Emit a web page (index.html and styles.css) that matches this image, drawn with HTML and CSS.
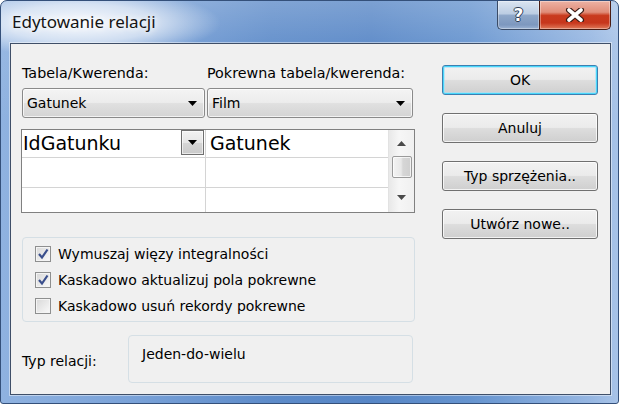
FILE: index.html
```html
<!DOCTYPE html>
<html lang="pl">
<head>
<meta charset="utf-8">
<title>Edytowanie relacji</title>
<link rel="stylesheet" href="styles.css">
</head>
<body>
<div class="window">
  <div class="titlebar">
    <div class="title">Edytowanie relacji</div>
    <div class="caption">
      <div class="cbtn help"><span>?</span></div>
      <div class="cbtn close">
        <svg width="20" height="14" viewBox="0 0 20 14">
          <path d="M4 2 L16 12 M16 2 L4 12" stroke="#3a1a14" stroke-width="6" stroke-linecap="round"/>
          <path d="M4 2 L16 12 M16 2 L4 12" stroke="#ffffff" stroke-width="3.6" stroke-linecap="round"/>
        </svg>
      </div>
    </div>
  </div>
  <div class="client">
    <div class="left">
      <div class="labels">
        <span class="lab1">Tabela/Kwerenda:</span>
        <span>Pokrewna tabela/kwerenda:</span>
      </div>
      <div class="combos">
        <div class="combo c1"><span>Gatunek</span><svg class="arr" width="9" height="5" viewBox="0 0 9 5"><path d="M0 0 H9 L4.5 5 Z" fill="#000"/></svg></div>
        <div class="combo c2"><span>Film</span><svg class="arr" width="9" height="5" viewBox="0 0 9 5"><path d="M0 0 H9 L4.5 5 Z" fill="#000"/></svg></div>
      </div>
      <div class="grid">
        <div class="col col1">
          <div class="row r1"><span class="cell">IdGatunku</span><div class="dd"><svg width="9" height="5" viewBox="0 0 9 5"><path d="M0 0 H9 L4.5 5 Z" fill="#000"/></svg></div></div>
          <div class="row r2"></div>
          <div class="row r3"></div>
        </div>
        <div class="col col2">
          <div class="row r1"><span class="cell c2cell">Gatunek</span></div>
          <div class="row r2"></div>
          <div class="row r3"></div>
        </div>
        <div class="scroll">
          <svg class="sarrow" width="9" height="5" viewBox="0 0 9 5"><path d="M0 5 H9 L4.5 0 Z" fill="#4a4a4a"/></svg>
          <div class="thumb"></div>
          <svg class="sarrow down" width="9" height="5" viewBox="0 0 9 5"><path d="M0 0 H9 L4.5 5 Z" fill="#4a4a4a"/></svg>
        </div>
      </div>
      <div class="group">
        <div class="chk"><span class="box checked"><svg width="12" height="12" viewBox="0 0 12 12"><path d="M2 6 L5 9.5 L10.5 1.5" fill="none" stroke="#3a4f8c" stroke-width="2.2"/></svg></span><span>Wymuszaj więzy integralności</span></div>
        <div class="chk"><span class="box checked"><svg width="12" height="12" viewBox="0 0 12 12"><path d="M2 6 L5 9.5 L10.5 1.5" fill="none" stroke="#3a4f8c" stroke-width="2.2"/></svg></span><span>Kaskadowo aktualizuj pola pokrewne</span></div>
        <div class="chk"><span class="box"></span><span>Kaskadowo usuń rekordy pokrewne</span></div>
      </div>
      <div class="reltype">
        <span class="rlabel">Typ relacji:</span>
        <div class="relbox">Jeden-do-wielu</div>
      </div>
    </div>
    <div class="buttons">
      <div class="btn default">OK</div>
      <div class="btn">Anuluj</div>
      <div class="btn">Typ sprzężenia..</div>
      <div class="btn">Utwórz nowe..</div>
    </div>
  </div>
</div>
</body>
</html>
```
FILE: styles.css
```css
* { box-sizing: border-box; }
html, body { margin: 0; background: #ffffff; }
body {
  font-family: "DejaVu Sans", Tahoma, sans-serif;
  font-size: 14px;
  color: #000;
}
.window {
  width: 619px;
  height: 404px;
  border: 1px solid #34507a;
  border-radius: 7px 7px 3px 3px;
  display: flex;
  flex-direction: column;
  background:
    radial-gradient(ellipse 140px 34px at 80px 22px, rgba(255,255,255,0.95), rgba(255,255,255,0.6) 55%, rgba(255,255,255,0) 100%),
    linear-gradient(to bottom, rgba(255,255,255,0.22) 0, rgba(255,255,255,0.08) 40px, rgba(255,255,255,0) 120px),
    linear-gradient(to right, #8fb2e0 0, #7aa2d8 130px, #5d8bc9 270px, #5786c6 370px, #6694cf 470px, #97b7e2 590px, #a9c4e8 619px);
}
.titlebar {
  height: 42px;
  display: flex;
  justify-content: space-between;
  align-items: flex-start;
}
.title {
  font-family: "Noto Sans", sans-serif;
  font-size: 17px;
  line-height: 22px;
  padding: 10px 0 0 11px;
  color: #141414;
  text-shadow: 0 0 6px #fff, 0 0 10px #fff;
}
.caption {
  display: flex;
  margin-right: 7px;
}
.cbtn {
  height: 29px;
  display: flex;
  align-items: center;
  justify-content: center;
  border: 1px solid #3a4b66;
  border-top: none;
  box-shadow: inset 0 0 0 1px rgba(255,255,255,0.35);
}
.help {
  width: 42px;
  border-radius: 0 0 0 5px;
  border-right: none;
  background: linear-gradient(to bottom, #dbe5f1 0%, #bccde3 45%, #8ea7c9 52%, #7d98bf 85%, #9bb2d3 100%);
}
.help span {
  font-family: "DejaVu Sans", sans-serif;
  font-weight: bold;
  font-size: 17px;
  color: #fff;
  text-shadow: 1px 0 0 #2e3c55, -1px 0 0 #2e3c55, 0 1px 0 #2e3c55, 0 -1px 0 #2e3c55;
}
.close {
  width: 72px;
  border-radius: 0 0 5px 0;
  border-color: #4a1d14;
  background: linear-gradient(to bottom, #ecb2a4 0%, #e08d79 40%, #c93a1e 52%, #c7361c 78%, #e07a5a 100%);
}
.client {
  margin-left: 9px;
  width: 601px;
  height: 352px;
  border: 1px solid #3f4f68;
  box-shadow: 0 0 0 1px rgba(255,255,255,0.45);
  background: #f0f0f0;
  display: flex;
  padding: 21px 0 0 11px;
}
.left {
  width: 393px;
  display: flex;
  flex-direction: column;
}
.labels {
  display: flex;
  height: 16px;
  line-height: 16px;
  font-size: 14.3px;
}
.lab1 { width: 185px; }
.combos {
  margin-top: 7px;
  display: flex;
  gap: 2px;
  height: 30px;
}
.combo {
  height: 30px;
  border: 1px solid #8a8a8a;
  border-radius: 3px;
  background: linear-gradient(to bottom, #f4f4f4 0%, #ececec 48%, #e0e0e0 52%, #d4d4d4 100%);
  box-shadow: inset 0 0 0 1px rgba(255,255,255,0.7);
  display: flex;
  align-items: center;
  justify-content: space-between;
  padding: 0 7px 0 4px;
}
.c1 { width: 183px; }
.c2 { width: 206px; }
.grid {
  margin-top: 11px;
  margin-left: -1px;
  width: 394px;
  height: 84px;
  border: 1px solid #808080;
  background: #fff;
  display: flex;
}
.col { display: flex; flex-direction: column; }
.col1 { width: 184px; border-right: 1px solid #d4d4d4; }
.col2 { width: 182px; }
.row { border-bottom: 1px solid #d4d4d4; display: flex; align-items: flex-start; justify-content: space-between; }
.row.r1 { height: 28px; }
.row.r2 { height: 30px; }
.row.r3 { flex: 1; border-bottom: none; }
.cell {
  font-size: 19px;
  line-height: 27px;
  padding-left: 1px;
}
.c2cell { padding-left: 4px; }
.dd {
  width: 23px;
  height: 25px;
  margin-right: 1px;
  border: 1px solid #6f6f6f;
  background: linear-gradient(to bottom, #f2f2f2 0%, #e6e6e6 50%, #d6d6d6 51%, #cacaca 100%);
  box-shadow: inset 0 0 0 1px rgba(255,255,255,0.6);
  display: flex;
  align-items: center;
  justify-content: center;
}
.scroll {
  width: 26px;
  border-left: 1px solid #e2e2e2;
  background: linear-gradient(to right, #e8e8e8, #f6f6f6 40%, #f0f0f0);
  display: flex;
  flex-direction: column;
  align-items: center;
}
.sarrow { margin-top: 11px; }
.thumb {
  margin-top: 10px;
  width: 20px;
  height: 22px;
  border: 1px solid #9a9a9a;
  border-radius: 2px;
  background: linear-gradient(to right, #f3f3f3 0%, #e8e8e8 45%, #d6d6d6 55%, #cfcfcf 100%);
  box-shadow: inset 0 0 0 1px rgba(255,255,255,0.7);
}
.sarrow.down { margin-top: 17px; }
.group {
  margin-top: 24px;
  height: 85px;
  border: 1px solid #d5dfe5;
  border-radius: 4px;
  padding: 3px 0 0 12px;
}
.chk {
  height: 26px;
  display: flex;
  align-items: center;
  gap: 7px;
}
.box {
  width: 16px;
  height: 16px;
  border: 1px solid #8e8f8f;
  background: linear-gradient(135deg, #d8d8d8 0%, #ececec 60%, #fafafa 100%);
  box-shadow: inset 0 0 0 1px #f4f4f4;
  display: flex;
  align-items: center;
  justify-content: center;
}
.reltype {
  margin-top: 13px;
  height: 48px;
  display: flex;
}
.rlabel {
  width: 106px;
  padding-top: 18px;
  line-height: 16px;
}
.relbox {
  width: 285px;
  height: 48px;
  border: 1px solid #d5dfe5;
  border-radius: 4px;
  padding: 10px 13px 0;
  line-height: 16px;
}
.buttons {
  margin-left: 27px;
  display: flex;
  flex-direction: column;
  gap: 18px;
}
.btn {
  width: 156px;
  height: 30px;
  border: 1px solid #707070;
  border-radius: 3px;
  background: linear-gradient(to bottom, #f2f2f2 0%, #ebebeb 48%, #dddddd 52%, #cfcfcf 100%);
  box-shadow: inset 0 0 0 1px rgba(255,255,255,0.75);
  display: flex;
  align-items: center;
  justify-content: center;
}
.btn.default {
  border-color: #3c7fb1;
  box-shadow: inset 0 0 0 1px #48d7fb, inset 0 0 0 2px rgba(160,225,250,0.6);
}
```
